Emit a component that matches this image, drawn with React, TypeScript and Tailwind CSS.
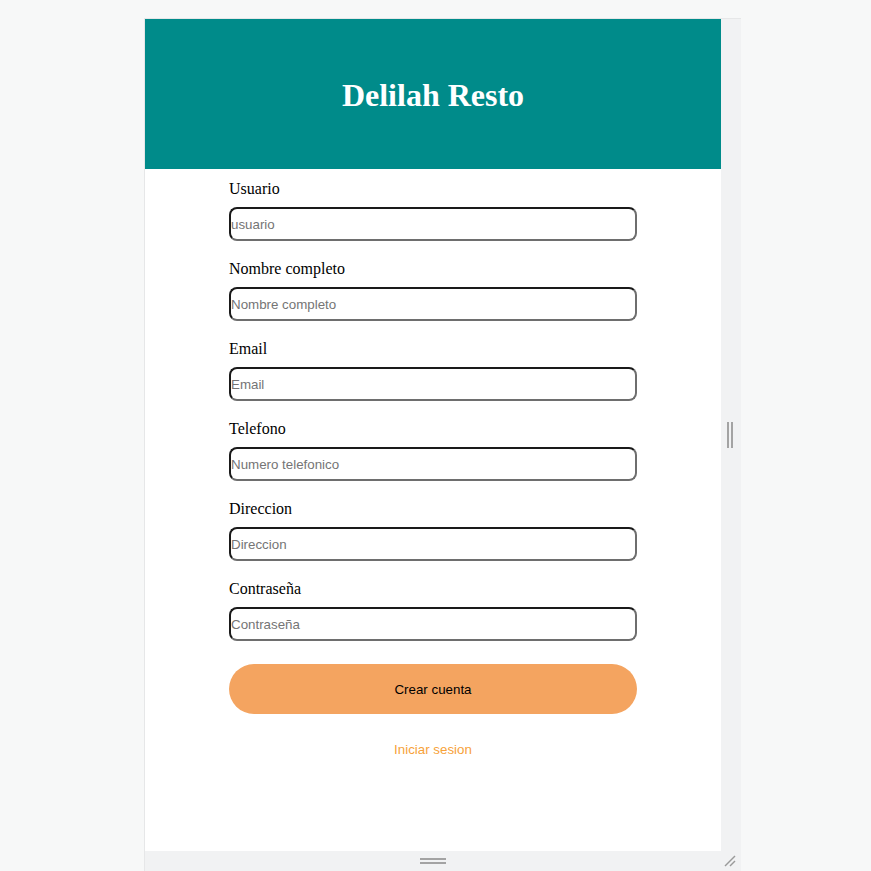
import React from "react";

const fields = [
  { label: "Usuario", ph: "usuario" },
  { label: "Nombre completo", ph: "Nombre completo" },
  { label: "Email", ph: "Email" },
  { label: "Telefono", ph: "Numero telefonico" },
  { label: "Direccion", ph: "Direccion" },
  { label: "Contraseña", ph: "Contraseña" },
];

export default function App() {
  return (
    <div className="min-h-[871px] w-full bg-[#f7f8f8] pt-[18px]">
      <div className="ml-[144px] w-[597px] border-l border-t border-[#e6e7e8]">
        <div className="flex">
          <div className="h-[832px] w-[576px] bg-white">
            <header className="flex h-[150px] items-center justify-center bg-[#008b8a]">
              <h1
                className="pt-[2px] text-[32px] font-bold leading-none text-white"
                style={{ fontFamily: '"Liberation Serif", "Times New Roman", serif' }}
              >
                Delilah Resto
              </h1>
            </header>
            <form
              className="mx-auto flex w-[408px] flex-col pt-[9px]"
              onSubmit={(e) => e.preventDefault()}
            >
              {fields.map((f) => (
                <div key={f.label} className="mb-[17px] flex flex-col">
                  <label
                    className="mb-[8px] h-[21px] text-[16px] leading-[21px] text-black"
                    style={{ fontFamily: '"Liberation Serif", "Times New Roman", serif' }}
                  >
                    {f.label}
                  </label>
                  <input
                    placeholder={f.ph}
                    className="h-[34px] w-full rounded-[8px] border-2 border-t-[#1a1a1a] border-l-[#1a1a1a] border-b-[#6e6e6e] border-r-[#6e6e6e] bg-white px-[0px] text-[13.333px] text-black placeholder:text-[#757575] outline-none"
                    style={{ fontFamily: '"Liberation Sans", Arial, sans-serif' }}
                  />
                </div>
              ))}
              <button
                type="submit"
                className="mt-[6px] h-[50px] w-full rounded-full bg-[#f4a460] pt-[1px] text-[13.333px] text-black"
                style={{ fontFamily: '"Liberation Sans", Arial, sans-serif' }}
              >
                Crear cuenta
              </button>
              <a
                href="#"
                className="mt-[28px] block text-center text-[13.333px] leading-[16px] text-[#f7a23a]"
                style={{ fontFamily: '"Liberation Sans", Arial, sans-serif' }}
              >
                Iniciar sesion
              </a>
            </form>
          </div>
          <div className="flex h-[832px] w-[20px] items-center justify-center bg-[#f1f2f3]">
            <div className="flex gap-[2px] pr-[2px]">
              <div className="h-[26px] w-[2px] bg-[#a3a3a3]" />
              <div className="h-[26px] w-[2px] bg-[#a3a3a3]" />
            </div>
          </div>
        </div>
        <div className="relative flex h-[20px] w-full items-center justify-center bg-[#f1f2f3]">
          <div className="flex flex-col gap-[2px] pr-[20px] pb-[1px]">
            <div className="h-[2px] w-[26px] bg-[#a3a3a3]" />
            <div className="h-[2px] w-[26px] bg-[#a3a3a3]" />
          </div>
          <svg
            className="absolute right-[4px] bottom-[3px]"
            width="14"
            height="14"
            viewBox="0 0 14 14"
          >
            <line x1="2" y1="12" x2="12" y2="2" stroke="#9a9a9a" strokeWidth="1.5" />
            <line x1="7" y1="12" x2="12" y2="7" stroke="#9a9a9a" strokeWidth="1.5" />
          </svg>
        </div>
      </div>
    </div>
  );
}
